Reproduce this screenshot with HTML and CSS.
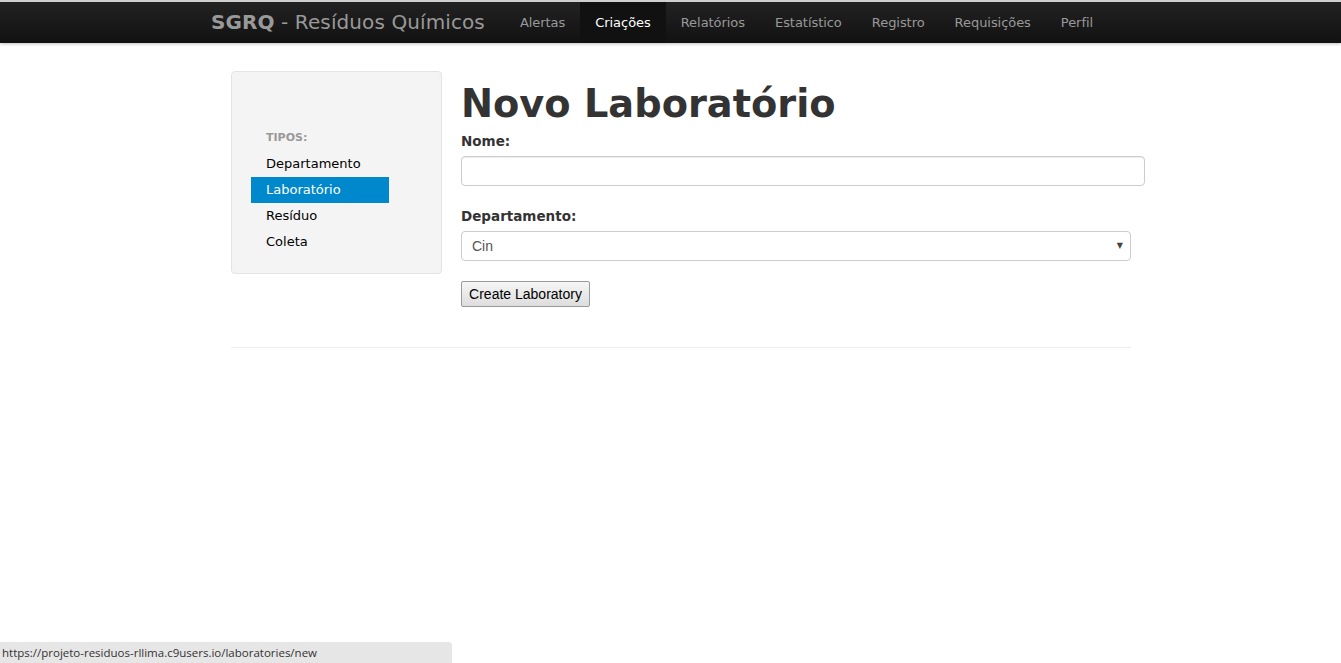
FILE: index.html
```html
<!DOCTYPE html>
<html lang="pt">
<head>
<meta charset="utf-8">
<title>SGRQ - Resíduos Químicos</title>
<link rel="stylesheet" href="styles.css">
</head>
<body>
<header class="navbar">
  <div class="navbar-inner">
    <a class="brand" href="#"><b>SGRQ</b> - Resíduos Químicos</a>
    <ul class="nav">
      <li><a href="#">Alertas</a></li>
      <li class="active"><a href="#">Criações</a></li>
      <li><a href="#">Relatórios</a></li>
      <li><a href="#">Estatístico</a></li>
      <li><a href="#">Registro</a></li>
      <li><a href="#">Requisições</a></li>
      <li><a href="#">Perfil</a></li>
    </ul>
  </div>
</header>
<div class="container">
  <div class="row">
    <aside class="well">
      <ul class="nav-list">
        <li class="nav-header">Tipos:</li>
        <li><a href="#">Departamento</a></li>
        <li class="active"><a href="#">Laboratório</a></li>
        <li><a href="#">Resíduo</a></li>
        <li><a href="#">Coleta</a></li>
      </ul>
    </aside>
    <main class="content">
      <h1>Novo Laboratório</h1>
      <form class="form">
        <label class="label" for="nome">Nome:</label>
        <input class="text-input" id="nome" type="text">
        <label class="label label-dep" for="dep">Departamento:</label>
        <div class="select-wrap">
          <select class="select" id="dep"><option>Cin</option></select>
          <span class="caret">▼</span>
        </div>
        <button class="btn" type="button">Create Laboratory</button>
      </form>
    </main>
  </div>
  <hr class="divider">
</div>
<div class="statusbar">https://projeto-residuos-rllima.c9users.io/laboratories/new</div>
</body>
</html>
```

FILE: styles.css
```css
* { box-sizing: border-box; }
html, body { margin: 0; padding: 0; }
body {
  font-family: "DejaVu Sans", Verdana, sans-serif;
  font-size: 13px;
  color: #333;
  background: #fff;
  height: 663px;
  overflow: hidden;
}
a { text-decoration: none; }

.navbar {
  height: 43px;
  background: linear-gradient(#222, #111);
  border-top: 2px solid #cfcfcf;
  box-shadow: 0 1px 3px rgba(0,0,0,0.25);
}
.navbar-inner {
  display: flex;
  align-items: stretch;
  height: 41px;
  padding-left: 211px;
}
.brand {
  font-size: 20px;
  color: #999;
  line-height: 40px;
  margin-right: 20px;
  letter-spacing: 0.1px;
}
.brand b { color: #999; }
.nav {
  display: flex;
  list-style: none;
  margin: 0;
  padding: 0;
}
.nav li a {
  display: block;
  padding: 0 15px;
  line-height: 41px;
  color: #999;
  font-size: 13px;
  letter-spacing: -0.05px;
}
.nav li.active a {
  background: #111;
  color: #fff;
}

.container {
  width: 900px;
  margin-left: 231px;
  padding-top: 28px;
}
.row {
  display: flex;
  gap: 19px;
}
.well {
  flex: 0 0 211px;
  width: 211px;
  height: 203px;
  background: #f4f4f4;
  border: 1px solid #e3e3e3;
  border-radius: 4px;
  padding: 57px 0 0 19px;
}
.nav-list {
  list-style: none;
  margin: 0;
  padding: 0;
  width: 138px;
}
.nav-header {
  font-size: 11px;
  font-weight: bold;
  color: #999;
  text-transform: uppercase;
  padding-left: 15px;
  line-height: 18px;
  margin-bottom: 4px;
}
.nav-list li a {
  display: block;
  padding-left: 15px;
  line-height: 26px;
  color: #000;
  font-size: 13px;
}
.nav-list li.active a {
  background: #0088cc;
  color: #fff;
}

.content {
  flex: 0 0 auto;
}
h1 {
  margin: 10px 0 0;
  font-size: 38.3px;
  line-height: 46px;
  font-weight: bold;
  color: #333;
}
.form { display: flex; flex-direction: column; align-items: flex-start; }
.label {
  font-weight: bold;
  font-size: 13.5px;
  color: #333;
  line-height: 20px;
  margin-top: 4px;
  margin-bottom: 5px;
}
.label-dep { margin-top: 20px; margin-bottom: 5px; }
.text-input {
  width: 684px;
  height: 30px;
  border: 1px solid #ccc;
  border-radius: 4px;
  box-shadow: inset 0 1px 1px rgba(0,0,0,0.075);
  padding: 4px 10px;
  font-size: 14px;
}
.select-wrap {
  position: relative;
  width: 670px;
}
.select {
  width: 670px;
  height: 30px;
  border: 1px solid #ccc;
  border-radius: 4px;
  background: #fff;
  appearance: none;
  -webkit-appearance: none;
  padding: 0 10px;
  font-family: "Liberation Sans", Arial, sans-serif;
  font-size: 14px;
  color: #555;
}
.caret {
  position: absolute;
  right: 8px;
  top: 10px;
  font-size: 8px;
  color: #444;
  pointer-events: none;
  font-family: "DejaVu Sans", sans-serif;
}
.btn {
  margin-top: 20px;
  width: 129px;
  height: 26px;
  font-family: "Liberation Sans", Arial, sans-serif;
  font-size: 14px;
  color: #000;
  background: linear-gradient(#f6f6f6, #dddddd);
  border: 1px solid #9a9a9a;
  border-radius: 2px;
  padding: 0;
}
.divider {
  margin: 40px 0 0;
  border: 0;
  border-top: 1px solid #eee;
  border-bottom: 1px solid #fff;
}
.statusbar {
  position: fixed;
  left: 0;
  bottom: 0;
  width: 452px;
  height: 21px;
  background: #e6e6e6;
  border-top-right-radius: 4px;
  font-family: "Open Sans", "Noto Sans", sans-serif;
  font-size: 11.5px;
  line-height: 21px;
  color: #333;
  padding-left: 2px;
}
```
